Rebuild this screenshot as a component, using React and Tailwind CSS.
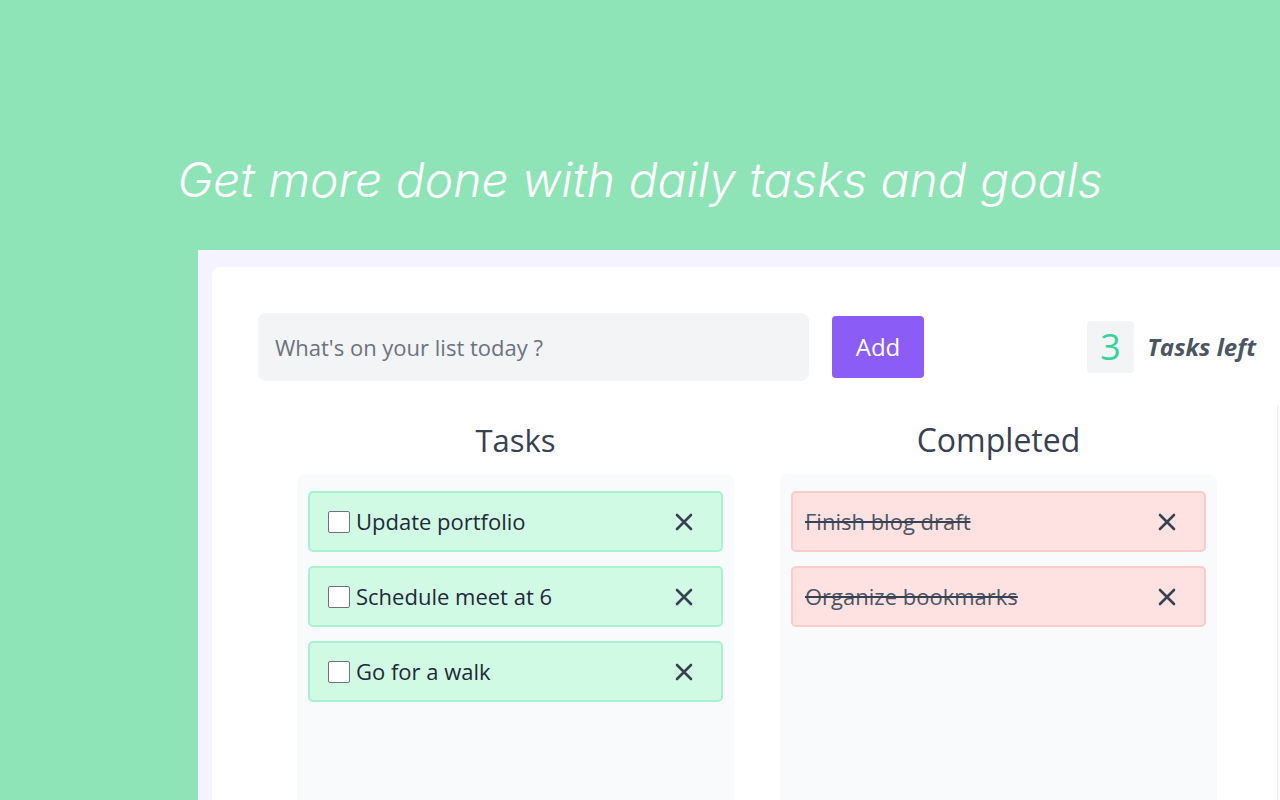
const tasks = ["Update portfolio", "Schedule meet at 6", "Go for a walk"];
const completed = ["Finish blog draft", "Organize bookmarks"];

const appFont = { fontFamily: '"Open Sans", "Noto Sans", sans-serif' };

function CloseIcon() {
  return (
    <svg width="18" height="18" viewBox="0 0 18 18" className="shrink-0">
      <path d="M2 2 L16 16 M16 2 L2 16" stroke="#374151" strokeWidth="2.6" strokeLinecap="round" />
    </svg>
  );
}

function TaskItem({ text }) {
  return (
    <div className="flex items-center h-[61px] rounded-[5px] border-2 border-[#a7f3d0] bg-[#d1fae5] pl-[12px] pr-[28px]">
      <span className="ml-[6px] w-[22px] h-[22px] rounded-[2px] border-[1.5px] border-[#6b7280] bg-white shrink-0" />
      <span className="ml-[6px] text-[22px] text-[#1f2937] flex-1">{text}</span>
      <CloseIcon />
    </div>
  );
}

function DoneItem({ text }) {
  return (
    <div className="flex items-center h-[61px] rounded-[5px] border-2 border-[#fecaca] bg-[#fee2e2] pl-[12px] pr-[28px]">
      <span className="text-[22px] text-[#4b5563] line-through decoration-[#374151] flex-1">{text}</span>
      <CloseIcon />
    </div>
  );
}

export default function App() {
  return (
    <div className="h-screen overflow-hidden bg-[#8ee4b7] flex flex-col">
      {/* Headline */}
      <div className="h-[250px] shrink-0 pt-[148px] text-center">
        <h1
          className="text-white text-[48px] italic font-light leading-[64px]"
          style={{ fontFamily: "Inter, sans-serif" }}
        >
          Get more done with daily tasks and goals
        </h1>
      </div>

      {/* App frame */}
      <div className="flex-1 ml-[198px] bg-[#f5f3ff] pt-[17px] pl-[14px] flex">
        <div className="flex-1 bg-white rounded-tl-lg flex" style={appFont}>
          <div className="w-[1065px] shrink-0 pt-[46px] pl-[46px]">
            {/* Input row */}
            <div className="w-[998px] flex items-center justify-between">
              <div className="flex items-center">
                <div className="w-[551px] h-[68px] rounded-lg bg-[#f3f4f6] flex items-center pl-[17px] text-[22px] text-[#6b7280]">
                  What's on your list today ?
                </div>
                <button className="ml-[23px] w-[92px] h-[62px] rounded-[4px] bg-[#8b5cf6] text-white text-[24px]">
                  Add
                </button>
              </div>
              <div className="flex items-center">
                <div className="w-[47px] h-[52px] rounded-[4px] bg-[#f3f4f6] flex items-center justify-center text-[36px] text-[#34d399]">
                  3
                </div>
                <span className="ml-[13px] text-[24px] font-bold italic text-[#4b5563]">Tasks left</span>
              </div>
            </div>

            {/* Columns */}
            <div className="w-[920px] ml-[39px] mt-[40px] grid grid-cols-2 gap-[46px]">
              <div className="flex flex-col">
                <h2 className="text-center text-[31px] text-[#374151] leading-[38px] mb-[15px]">Tasks</h2>
                <div className="h-[400px] rounded-lg bg-[#f9fafb] px-[11px] pt-[17px] flex flex-col gap-[14px]">
                  {tasks.map((t) => (
                    <TaskItem key={t} text={t} />
                  ))}
                </div>
              </div>
              <div className="flex flex-col">
                <h2 className="text-center text-[32px] text-[#374151] leading-[38px] mb-[15px]">Completed</h2>
                <div className="h-[400px] rounded-lg bg-[#f9fafb] px-[11px] pt-[17px] flex flex-col gap-[14px]">
                  {completed.map((t) => (
                    <DoneItem key={t} text={t} />
                  ))}
                </div>
              </div>
            </div>
          </div>
          <div className="flex-1 mt-[138px] border-l border-[#ececec] bg-[#fcfcfc]" />
        </div>
      </div>
    </div>
  );
}
